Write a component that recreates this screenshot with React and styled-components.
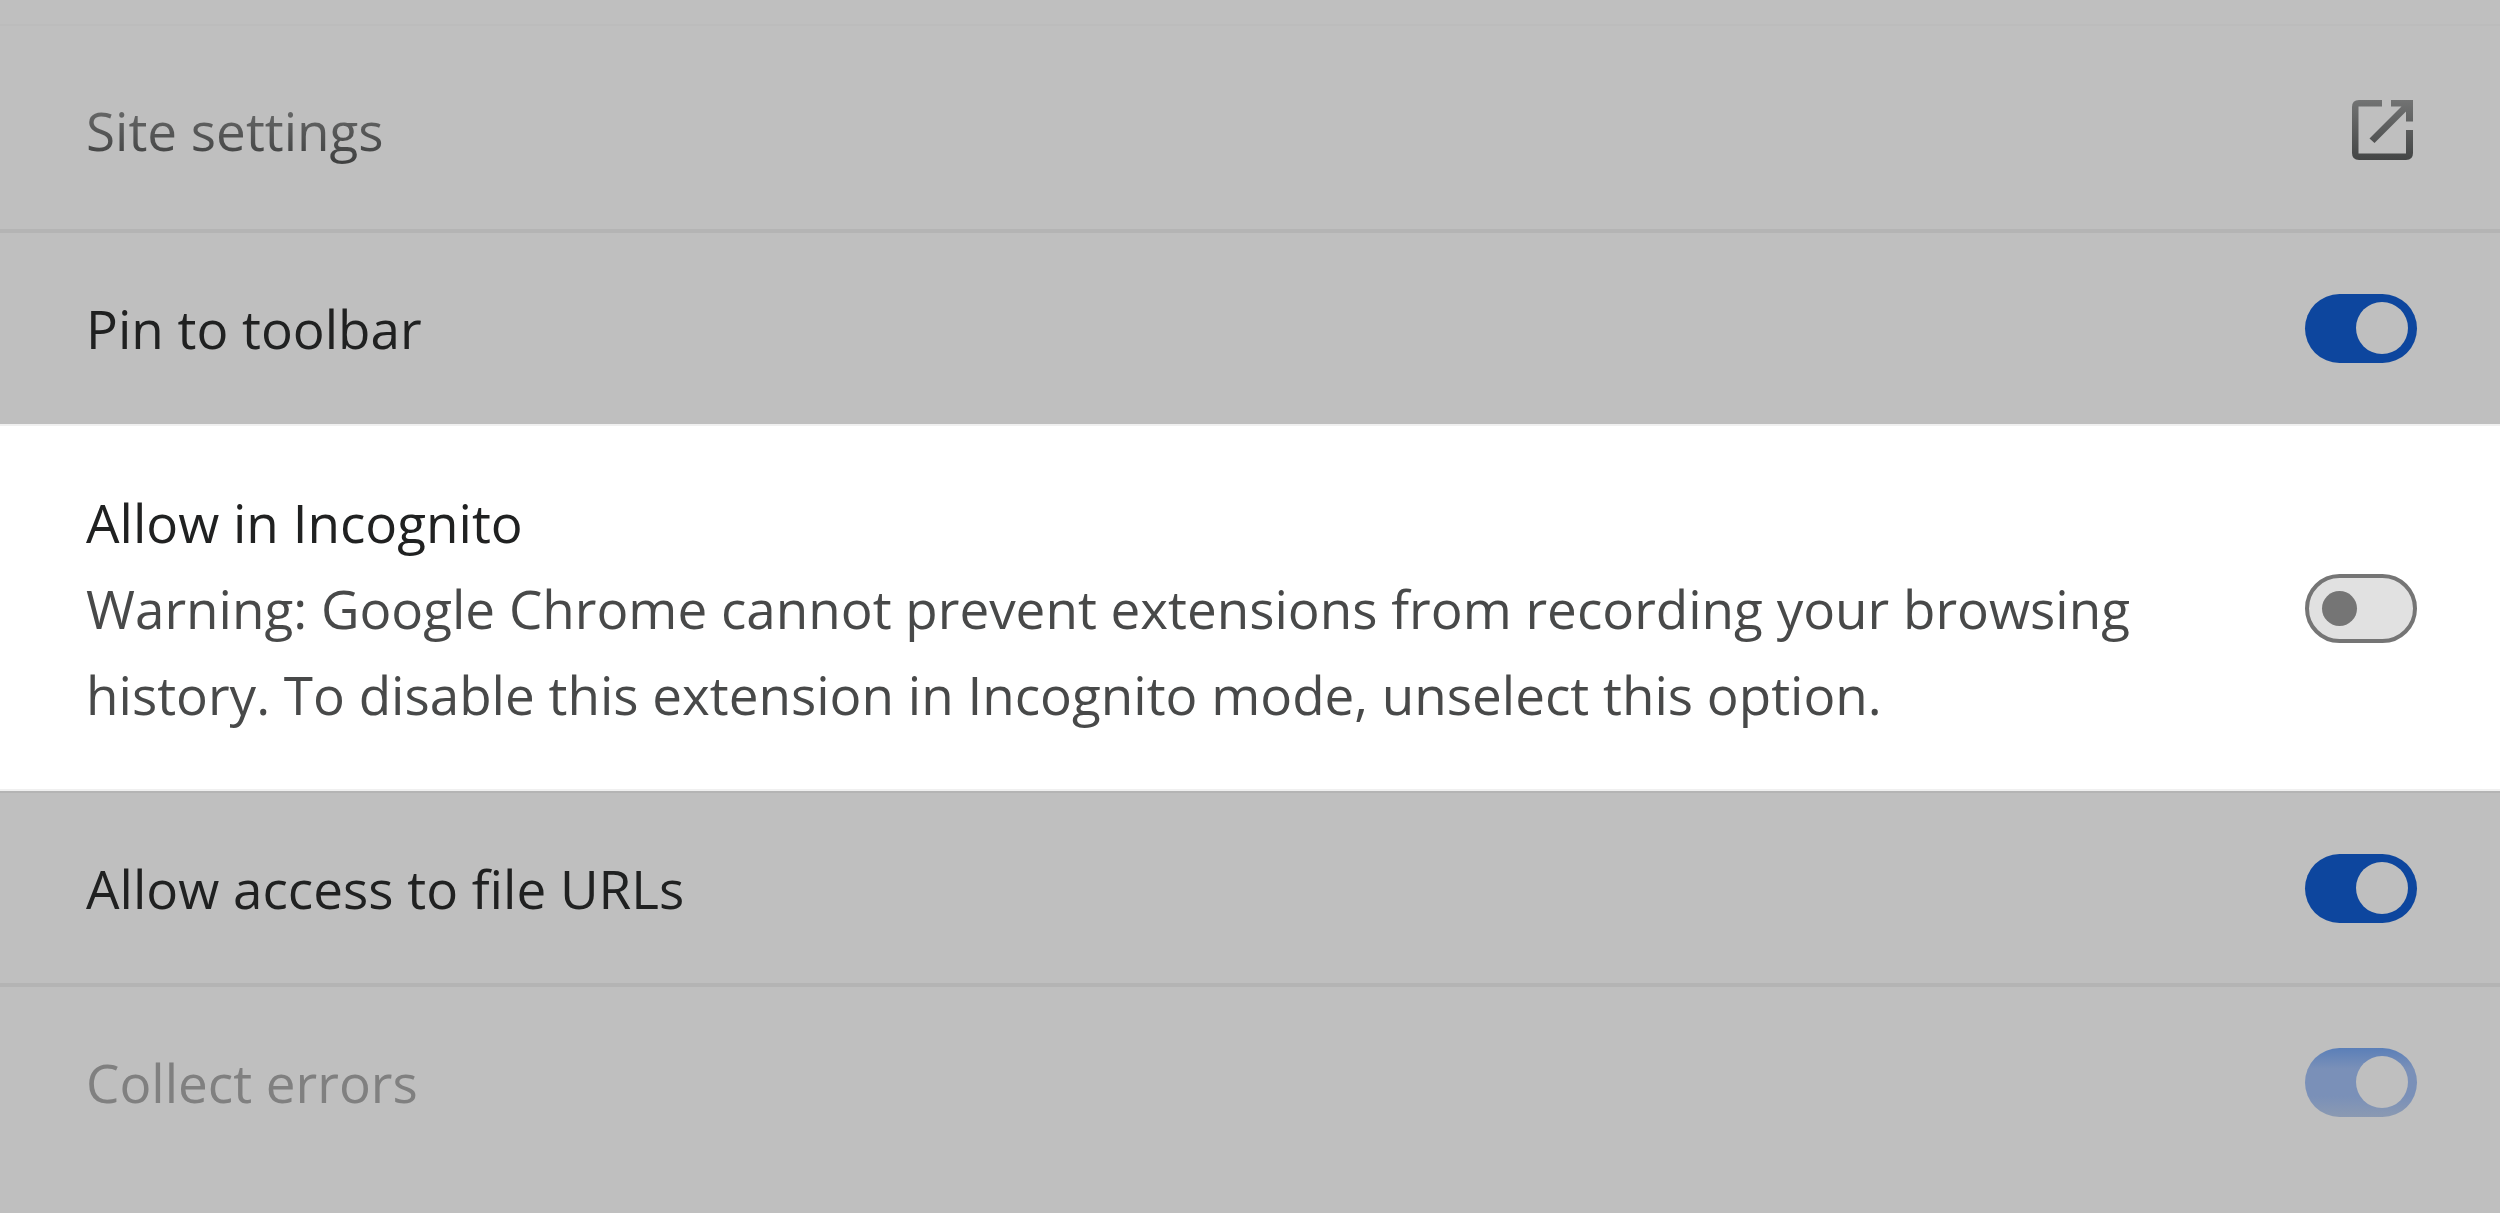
import React from "react";
import styled, { createGlobalStyle, css } from "styled-components";

const GlobalStyle = createGlobalStyle`
  *, *::before, *::after { box-sizing: border-box; }
  html { background: #bfbfbf; }
  body {
    margin: 0;
    font-family: "Open Sans", "Noto Sans", sans-serif;
    font-size: 53px;
    line-height: 86px;
    color: #202121;
  }
`;

const Page = styled.main`
  padding: 24px 0 36px;
`;

const rowStyles = css`
  display: flex;
  align-items: center;
  justify-content: space-between;
  gap: 64px;
  padding: 51px 83px 51px 86px;
  border-top: 4px solid #b4b4b4;
`;

const LinkRow = styled.a`
  ${rowStyles}
  min-height: 205px;
  padding-top: 55px;
  padding-right: 87px;
  border-top: 2px solid #bcbcbc;
  text-decoration: none;
`;

const LinkText = styled.span`
  padding-top: 2px;
  background: linear-gradient(#6c6d6d 20%, #404141 85%);
  background-clip: text;
  color: transparent;
`;

const Row = styled.label`
  ${rowStyles}
  color: ${(p) => (p.$muted ? "#808080" : "#202121")};
`;

const HighlightRow = styled(Row)`
  margin-top: 1px;
  padding-top: 52px;
  background: #ffffff;
  border-top: 2px solid #f0f0f0;
  border-bottom: 2px solid #f0f0f0;

  & + label {
    border-top-width: 2px;
  }
`;

const Copy = styled.span`
  display: flex;
  flex-direction: column;
  flex: 1;
  padding-top: 2px;
`;

const Description = styled.span`
  color: #484949;
`;

const Switch = styled.input.attrs({ type: "checkbox", role: "switch" })`
  appearance: none;
  display: flex;
  align-items: center;
  flex: none;
  width: 112px;
  height: 69px;
  margin: 0;
  padding: 0 13px;
  border: 4px solid #757575;
  border-radius: 35px;
  background: #e1e1e1;

  &::before {
    content: "";
    width: 35px;
    height: 35px;
    border-radius: 50%;
    background: #757575;
  }

  &:checked {
    justify-content: flex-end;
    padding: 0 9px;
    border: 0;
    background: #0d469e;
  }

  &:checked::before {
    width: 52px;
    height: 52px;
    background: #bfbfbf;
  }

  &:disabled {
    background: linear-gradient(#5b7fb8, #7a90b8 30%, #7a90b8 70%, #8b9ab2);
  }
`;

const OpenIcon = () => (
  <svg width="61" height="60" viewBox="0 0 61 60" fill="none" aria-hidden="true">
    <defs>
      <linearGradient id="ink" gradientUnits="userSpaceOnUse" x1="0" y1="0" x2="0" y2="60">
        <stop offset="0" stopColor="#727373" />
        <stop offset="1" stopColor="#434545" />
      </linearGradient>
    </defs>
    <path
      fill="url(#ink)"
      d="M30 0H7Q0 0 0 7V53Q0 60 7 60H54Q61 60 61 53V30H54V53.500H6.500V6.500H30ZM39 0V6.500H49.500L17.500 38.500L22.500 43L54 11.500V21.500H61V0Z"
    />
  </svg>
);

const settings = [
  { id: "pin", label: "Pin to toolbar", checked: true },
  {
    id: "incognito",
    label: "Allow in Incognito",
    description:
      "Warning: Google Chrome cannot prevent extensions from recording your browsing history. To disable this extension in Incognito mode, unselect this option.",
    highlighted: true,
  },
  { id: "files", label: "Allow access to file URLs", checked: true },
  { id: "errors", label: "Collect errors", checked: true, disabled: true },
];

export default function App() {
  return (
    <>
      <GlobalStyle />
      <Page>
        <LinkRow href="#site-settings">
          <LinkText>Site settings</LinkText>
          <OpenIcon />
        </LinkRow>
        {settings.map((s) => {
          const Item = s.highlighted ? HighlightRow : Row;
          return (
            <Item key={s.id} htmlFor={s.id} $muted={s.disabled}>
              <Copy>
                <span>{s.label}</span>
                {s.description && <Description>{s.description}</Description>}
              </Copy>
              <Switch id={s.id} defaultChecked={s.checked} disabled={s.disabled} />
            </Item>
          );
        })}
      </Page>
    </>
  );
}
